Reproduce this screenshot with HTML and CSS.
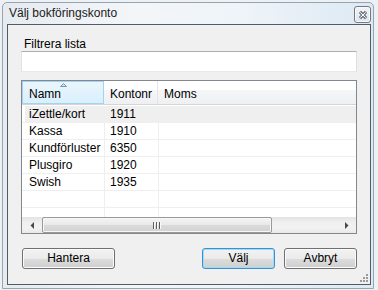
FILE: index.html
```html
<!doctype html>
<html>

<head>
<meta charset="utf-8" />
<title>Välj bokföringskonto</title>
<link rel="stylesheet" href="styles.css">
</head>

<body>

<div class="window">
	<div class="titlebar">
		<span class="title">Välj bokföringskonto</span>
		<span class="close">
			<svg width="8" height="8" viewBox="0 0 8 8"><path d="M1 1L7 7M7 1L1 7" stroke="#3a4350" stroke-width="3"/><path d="M1.3 1.3L6.7 6.7M6.7 1.3L1.3 6.7" stroke="#fff" stroke-width="1.2"/></svg>
		</span>
	</div>

	<div class="client">
		<label class="label" for="filter">Filtrera lista</label>
		<input id="filter" class="filter" type="text">

		<div class="list">
			<div class="head">
				<div class="col col-name sorted">Namn<span class="sort"><svg width="7" height="4" viewBox="0 0 7 4"><path d="M0.5 3.5L3.5 0.5L6.5 3.5Z" fill="#cfe0ef" stroke="#7b97b8" stroke-width="1"/></svg></span></div>
				<div class="col col-nr">Kontonr</div>
				<div class="col col-moms">Moms</div>
			</div>
			<div class="rows">
				<div class="row selected"><span class="cell c-name">iZettle/kort</span><span class="cell c-nr">1911</span><span class="cell c-moms"></span></div>
				<div class="row"><span class="cell c-name">Kassa</span><span class="cell c-nr">1910</span><span class="cell c-moms"></span></div>
				<div class="row"><span class="cell c-name">Kundförluster</span><span class="cell c-nr">6350</span><span class="cell c-moms"></span></div>
				<div class="row"><span class="cell c-name">Plusgiro</span><span class="cell c-nr">1920</span><span class="cell c-moms"></span></div>
				<div class="row"><span class="cell c-name">Swish</span><span class="cell c-nr">1935</span><span class="cell c-moms"></span></div>
				<div class="row"><span class="cell c-name"></span><span class="cell c-nr"></span><span class="cell c-moms"></span></div>
				<div class="row"><span class="cell c-name"></span><span class="cell c-nr"></span><span class="cell c-moms"></span></div>
			</div>
			<div class="hscroll">
				<span class="arrow"><svg width="4" height="7" viewBox="0 0 4 7"><path d="M4 0L0.5 3.5L4 7Z" fill="#4a4a4a"/></svg></span>
				<span class="track"><span class="thumb"><span class="grip"></span></span></span>
				<span class="arrow"><svg width="4" height="7" viewBox="0 0 4 7"><path d="M0 0L3.5 3.5L0 7Z" fill="#4a4a4a"/></svg></span>
			</div>
		</div>

		<div class="buttons">
			<button class="btn btn-wide">Hantera</button>
			<span class="spacer"></span>
			<button class="btn default">Välj</button>
			<button class="btn">Avbryt</button>
		</div>

		<span class="sizer">
			<svg width="8" height="8" viewBox="0 0 8 8" fill="#9a9a9a"><rect x="6" y="0" width="2" height="2"/><rect x="6" y="3" width="2" height="2"/><rect x="3" y="3" width="2" height="2"/><rect x="6" y="6" width="2" height="2"/><rect x="3" y="6" width="2" height="2"/><rect x="0" y="6" width="2" height="2"/></svg>
		</span>
	</div>
</div>

</body>

</html>
```

FILE: styles.css
```css
* {
	margin: 0;
	padding: 0;
	box-sizing: border-box;
}
html, body {
	width: 100%;
	height: 100%;
	overflow: hidden;
}
body {
	background: #eef1f4;
	font: 12px/15px "Liberation Sans", Arial, sans-serif;
	color: #000;
}

/* window frame */
.window {
	margin: 2px 0 0 2px;
	width: 372px;
	height: 287px;
	border: 1px solid #97a4b2;
	border-radius: 5px 5px 0 0;
	padding: 0 2px 3px 4px;
	background: linear-gradient(to right, #e6ebf0, #f3f6f9 35%, #eef4f9 65%, #dde9f3);
	display: flex;
	flex-direction: column;
}
.titlebar {
	height: 21px;
	display: flex;
	align-items: center;
}
.title {
	flex: 1;
	padding-left: 2px;
	color: #1b1b1b;
}
.close {
	align-self: flex-start;
	margin-top: 3px;
	width: 17px;
	height: 17px;
	border: 1px solid #6f7a87;
	border-radius: 3px;
	background: linear-gradient(#f1f4f7, #dfe5ec);
	box-shadow: inset 0 0 0 1px #f8fafc;
	display: flex;
	align-items: center;
	justify-content: center;
}

/* dialog body */
.client {
	flex: 1;
	position: relative;
	border: 1px solid #4f5b67;
	background: #f0f0f0;
	padding: 12px 13px 15px;
	display: flex;
	flex-direction: column;
}
.label {
	display: block;
	height: 14px;
	line-height: 14px;
	padding-left: 3px;
}
.filter {
	display: block;
	width: 100%;
	height: 21px;
	border: 1px solid;
	border-color: #abadb3 #dbdfe6 #e3e9ef #e2e3ea;
	background: #fff;
	font: inherit;
	outline: none;
}

/* list view */
.list {
	margin-top: 8px;
	height: 154px;
	border: 1px solid #828790;
	background: #fff;
	display: flex;
	flex-direction: column;
}
.head {
	height: 24px;
	flex: none;
	display: flex;
	border-bottom: 1px solid #d5d5d5;
	background: linear-gradient(#fff 0, #fff 9px, #f6f7f8 9px, #eff0f2 100%);
}
.col {
	position: relative;
	padding: 6px 0 0 6px;
	border-right: 1px solid #e3e5e8;
}
.col-name {
	width: 82px;
}
.col-nr {
	width: 54px;
}
.col-moms {
	flex: 1;
	border-right: none;
}
.sorted {
	border: 1px solid #a3d3ee;
	padding-top: 5px;
	background: linear-gradient(#eaf6fd, #d9effc);
}
.sort {
	position: absolute;
	top: 1px;
	left: 37px;
	line-height: 0;
}
.rows {
	flex: 1;
	padding-top: 1px;
	overflow: hidden;
}
.row {
	display: flex;
	height: 17px;
	line-height: 16px;
	border-bottom: 1px solid #efefef;
}
.row.selected {
	background: linear-gradient(to right, #fff 3px, #efefef 3px);
}
.cell {
	border-right: 1px solid #efefef;
}
.c-name {
	width: 83px;
	padding-left: 7px;
}
.c-nr {
	width: 54px;
	padding-left: 5px;
}
.c-moms {
	flex: 1;
	border-right: none;
}

/* horizontal scrollbar */
.hscroll {
	height: 16px;
	flex: none;
	display: flex;
	background: linear-gradient(#e3e3e3, #efefef 30%, #f2f2f2 70%, #e9e9e9);
}
.arrow {
	width: 19px;
	display: flex;
	align-items: center;
	justify-content: center;
}
.track {
	flex: 1;
	padding-left: 1px;
}
.thumb {
	width: 230px;
	height: 16px;
	border: 1px solid #999;
	border-radius: 2px;
	background: linear-gradient(#f4f4f4, #e9e9e9 50%, #dadada 50%, #d2d2d2);
	box-shadow: inset 0 0 0 1px #f7f7f7;
	display: flex;
	align-items: center;
	justify-content: center;
}
.grip {
	width: 8px;
	height: 7px;
	background: repeating-linear-gradient(to right, #5f5f5f 0 1px, #fafafa 1px 2px, transparent 2px 3px);
}

/* buttons */
.buttons {
	margin-top: 14px;
	display: flex;
}
.spacer {
	flex: 1;
}
.btn {
	width: 73px;
	height: 21px;
	border: 1px solid #707070;
	border-radius: 3px;
	background: linear-gradient(#f2f2f2, #ebebeb 50%, #dddddd 50%, #cfcfcf);
	box-shadow: inset 0 0 0 1px #fbfbfb;
	font: inherit;
	color: #000;
}
.btn-wide {
	width: 93px;
	margin-left: 1px;
}
.btn.default {
	margin-right: 9px;
	border-color: #3c8fd0;
	box-shadow: inset 0 0 0 1px #9fdcf8;
}
.sizer {
	position: absolute;
	right: 2px;
	bottom: 2px;
	line-height: 0;
}
```
